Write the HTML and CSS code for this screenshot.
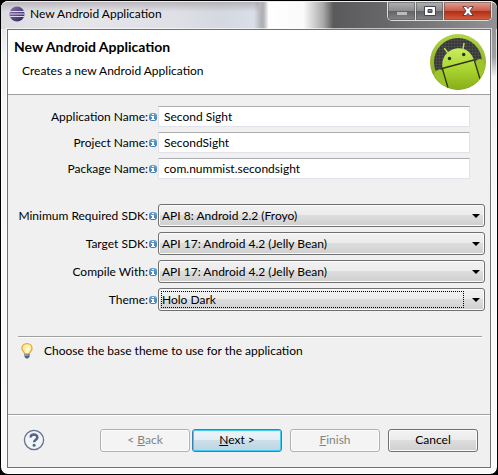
FILE: index.html
```html
<!DOCTYPE html>
<html lang="en">
<head>
<meta charset="utf-8">
<title>New Android Application</title>
<link rel="stylesheet" href="styles.css">
</head>
<body>
<svg width="0" height="0" class="defs" aria-hidden="true">
  <defs>
    <linearGradient id="blue" x1="0" y1="0" x2="0" y2="1"><stop offset="0" stop-color="#6aa5d0"/><stop offset="1" stop-color="#3c78ad"/></linearGradient>
    <symbol id="info" viewBox="0 0 8 8">
      <rect width="8" height="8" rx="3" fill="url(#blue)"/>
      <path d="M3 1h2v1H3zM3 3h2v3h1v1H2V6h1V4H2V3z" fill="#fff"/>
    </symbol>
  </defs>
</svg>
<main class="window">
  <header class="titlebar">
    <svg class="app-icon" viewBox="0 0 16 16" aria-hidden="true">
      <defs><linearGradient id="ecl" x1="0" y1="0" x2="1" y2="1"><stop offset="0" stop-color="#8a75ae"/><stop offset="1" stop-color="#302058"/></linearGradient></defs>
      <circle cx="8" cy="8" r="7.6" fill="url(#ecl)"/>
      <path d="M1 5.5h14M.5 8h15M1 10.5h14" stroke="#ded8ed" stroke-width="1.1"/>
    </svg>
    <h1 class="title">New Android Application</h1>
    <div class="window-controls">
      <button class="control" type="button" aria-label="Minimize" disabled><svg viewBox="0 0 12 12"><path d="M1 7h10v3H1z" fill="#bbb"/></svg></button>
      <button class="control" type="button" aria-label="Maximize"><svg viewBox="0 0 12 12"><path fill-rule="evenodd" d="M.5 1.500h11v9H.5zM4 4.500v3h4v-3z" fill="#fff" stroke="#434857"/></svg></button>
      <button class="control close" type="button" aria-label="Close"><svg viewBox="0 0 12 12"><path d="M.8 1.500h3.500L6 3.600l1.700-2.100h3.500L8 6l3.200 4.500H7.700L6 8.400l-1.700 2.100H.8L4 6z" fill="#fff" stroke="#4c3b45" stroke-width=".9"/></svg></button>
    </div>
  </header>
  <form class="dialog">
    <section class="banner">
      <div>
        <h2 class="heading">New Android Application</h2>
        <p class="subheading">Creates a new Android Application</p>
      </div>
      <svg class="logo" viewBox="0 0 56 56" aria-hidden="true">
        <defs>
          <linearGradient id="rim" x1="0" y1="0" x2="0" y2="1"><stop offset="0" stop-color="#b0d444"/><stop offset="1" stop-color="#779c16"/></linearGradient>
          <linearGradient id="droid" x1="0" y1="0" x2="0" y2="1"><stop offset="0" stop-color="#c9ed62"/><stop offset=".5" stop-color="#a9d430"/><stop offset="1" stop-color="#86ac18"/></linearGradient>
          <pattern id="mesh" width="3" height="3" patternUnits="userSpaceOnUse"><path d="M0 0h3v3H0z" fill="#383838"/><path d="M0 0h3M0 0v3" stroke="#555" stroke-width="1"/></pattern>
          <clipPath id="disc"><circle cx="28" cy="28" r="27.500"/></clipPath>
        </defs>
        <circle cx="28" cy="28" r="28" fill="url(#rim)"/>
        <circle cx="28" cy="28" r="24" fill="url(#mesh)"/>
        <g clip-path="url(#disc)">
          <path d="M5 38Q10 33 13 37L19 57H0zM45 28Q48 23 53 26L57 40 50 50z" fill="#9cc52b"/>
          <path d="M12.500 34C11 24 17 16 26 14.500C34 13 41 17 44 26L51 48Q39 58 28 56Q21 56 17 53z" fill="url(#droid)"/>
          <path d="M12 34.500L44 26M12.500 35L18 54M44.500 27L50 45" stroke="#30350e" stroke-width="1.300" fill="none"/>
          <path d="M18 19L14.500 14.500M33 15L34 9.500" stroke="#b9dd4b" stroke-width="1.500" stroke-linecap="round"/>
          <circle cx="19.500" cy="24.500" r="1.700" fill="#2b3010"/><circle cx="33.700" cy="20.500" r="1.700" fill="#2b3010"/>
        </g>
      </svg>
    </section>
    <section class="fields">
      <div class="row"><label for="app">Application Name:</label><svg class="info"><use href="#info"/></svg><input id="app" type="text" value="Second Sight"></div>
      <div class="row"><label for="project">Project Name:</label><svg class="info"><use href="#info"/></svg><input id="project" type="text" value="SecondSight"></div>
      <div class="row"><label for="package">Package Name:</label><svg class="info"><use href="#info"/></svg><input id="package" type="text" value="com.nummist.secondsight"></div>
    </section>
    <section class="fields choices">
      <div class="row"><label for="min">Minimum Required SDK:</label><svg class="info"><use href="#info"/></svg><div class="combo"><select id="min"><option>API 8: Android 2.2 (Froyo)</option></select></div></div>
      <div class="row"><label for="target">Target SDK:</label><svg class="info"><use href="#info"/></svg><div class="combo"><select id="target"><option>API 17: Android 4.2 (Jelly Bean)</option></select></div></div>
      <div class="row"><label for="compile">Compile With:</label><svg class="info"><use href="#info"/></svg><div class="combo"><select id="compile"><option>API 17: Android 4.2 (Jelly Bean)</option></select></div></div>
      <div class="row"><label for="theme">Theme:</label><svg class="info"><use href="#info"/></svg><div class="combo focused"><select id="theme"><option>Holo Dark</option></select></div></div>
    </section>
    <section class="hint">
      <svg class="bulb" viewBox="0 0 12 16" aria-hidden="true">
        <path d="M6 .7C3 .7 1 2.800 1 5.400C1 8 3.500 8.500 3.700 11h4.600C8.500 8.500 11 8 11 5.400C11 2.800 9 .7 6 .7z" fill="#fff0ad" stroke="#eca52c" stroke-width="1.300"/>
        <path d="M4 5l2 1.500L8 5M6 6.500V10" stroke="#fffbe8" stroke-width="1.200" fill="none"/>
        <path d="M3.500 11h5v3L7 15.500H5L3.500 14z" fill="#52647f"/><path d="M4 12h3.500" stroke="#b9cbe0"/>
      </svg>
      <p>Choose the base theme to use for the application</p>
    </section>
    <footer class="footer">
      <button class="help" type="button" aria-label="Help">
        <svg viewBox="0 0 22 22"><circle cx="11" cy="11" r="9.600" fill="#f3f4f7" stroke="#62728f" stroke-width="1.300"/><path d="M7.600 8.600C7.600 4.600 14.300 4.700 14.300 8.400C14.300 10.700 11.100 10.600 11.100 13.300" fill="none" stroke="#51658b" stroke-width="2.500"/><circle cx="11.100" cy="16.200" r="1.500" fill="#51658b"/></svg>
      </button>
      <div class="nav">
        <button class="btn" type="button" disabled>&lt; <u>B</u>ack</button>
        <button class="btn primary" type="button"><u>N</u>ext &gt;</button>
      </div>
      <button class="btn" type="button" disabled><u>F</u>inish</button>
      <button class="btn" type="button">Cancel</button>
    </footer>
  </form>
</main>
</body>
</html>
```
FILE: styles.css
```css
* { box-sizing: border-box; }

body {
  margin: 0;
  background: #000;
  color: #000;
  font: 12px/16px Lato, "Open Sans", sans-serif;
}

h1, h2, p { margin: 0; font-size: 12px; font-weight: 400; }
button, input, select { font: inherit; color: inherit; margin: 0; }
.defs { position: absolute; }

.window {
  display: flex;
  flex-direction: column;
  min-height: 100vh;
  padding: 0 6px 6px;
  border: 1px solid #000;
  border-radius: 8px;
  background:
    linear-gradient(#8c8c8e 0, #a0a0a2 56px, #e9edf300 76px) right / 7px 100% no-repeat,
    linear-gradient(#dcdde2 0, #f4f4f7 56px, #f8f8fa 50%, #fafafa);
  box-shadow: inset 0 0 0 1px #ffffffb0;
}

.titlebar {
  display: flex;
  align-items: flex-start;
  height: 28px;
  margin: 0 -6px;
  padding: 0 5px 0 8px;
  border-top: 1px solid #eee;
  border-radius: 7px 7px 0 0;
  background:
    linear-gradient(#9a94998c, #9a949900 10px) left / 52% 100% no-repeat,
    linear-gradient(90deg, #dcdde1, #e6e6ea 14%, #dfe0e6 35%, #d5d8e0 44%, #d9dee8 51%, #b0b1b6 52.5%, #b4b4b6 53%, #fff 54%, #fafafa 61%, #a8a8a8 65%, #5a5a5d 67%, #68686b 78%, #929294 100%);
}

.app-icon { width: 16px; height: 16px; margin-top: 4px; }
.title { flex: 1; margin: 4px 0 0 5px; }

.window-controls {
  display: flex;
  border: 1px solid #ddd;
  border-top: 0;
  border-radius: 0 0 5px 5px;
  overflow: hidden;
}

.control {
  display: flex;
  align-items: center;
  justify-content: center;
  width: 28px;
  height: 18px;
  padding: 0;
  border: 0;
  border-right: 1px solid #ddd;
  background: linear-gradient(#b1b1b3, #8c8c8f 48%, #626266 50%, #858589);
  box-shadow: inset 0 0 0 1px #5558;
}
.control svg { width: 12px; height: 12px; }
.close {
  width: 47px;
  border-right: 0;
  background: linear-gradient(#e3a292, #cb5c49 48%, #b02a14 50%, #d3603f);
}

.dialog {
  display: flex;
  flex: 1;
  flex-direction: column;
  border: 1px solid #707070;
  background: #f0f0f0;
  box-shadow: 0 0 0 1px #ffffffa0;
}

.banner {
  display: flex;
  justify-content: space-between;
  height: 65px;
  padding: 4px 4px 0 6px;
  border-bottom: 1px solid #a0a0a0;
  background: #fff;
}
.heading { margin-top: 5px; font-size: 14px; font-weight: 700; }
.subheading { margin: 8px 0 0 8px; }
.logo { width: 56px; height: 56px; }

.fields {
  display: flex;
  flex-direction: column;
  gap: 5px;
  padding: 11px 20px 0 8px;
}
.choices { padding: 25px 5px 0 8px; }

.row {
  display: grid;
  grid-template-columns: 132px 8px 1fr;
  align-items: center;
  column-gap: 1px;
}
.row label { text-align: right; white-space: nowrap; justify-self: end; }
.info { width: 8px; height: 8px; }

input {
  width: 100%;
  height: 21px;
  padding: 0 5px;
  border: 1px solid #e2e3ea;
  border-top-color: #abadb3;
  border-radius: 1px;
  background: #fff;
}

.combo { position: relative; }
.combo select {
  display: block;
  width: 100%;
  height: 23px;
  padding: 0 20px 0 3px;
  appearance: none;
  border: 1px solid #707070;
  border-radius: 3px;
  background: linear-gradient(#f2f2f2, #ebebeb 48%, #ddd 50%, #cfcfcf);
  box-shadow: inset 0 0 0 1px #fbfbfb;
}
.combo::after {
  content: "";
  position: absolute;
  top: 10px;
  right: 5px;
  border: 4px solid transparent;
  border-top-color: #000;
  border-bottom: 0;
}
.focused::before {
  content: "";
  position: absolute;
  inset: 3px 21px 3px 3px;
  border: 1px dotted #000;
  pointer-events: none;
}

.hint {
  display: flex;
  gap: 11px;
  flex: 1;
  margin: 25px 8px 0 10px;
  padding: 6px 0 0 3px;
  border-top: 1px solid #a0a0a0;
  box-shadow: inset 0 1px #fff;
}
.bulb { width: 12px; height: 16px; }

.footer {
  display: flex;
  align-items: center;
  gap: 8px;
  height: 53px;
  padding: 0 12px 2px 15px;
  border-top: 1px solid #a0a0a0;
  box-shadow: inset 0 1px #fff;
}
.help { width: 22px; height: 22px; margin-right: auto; padding: 0; border: 0; background: none; }
.help svg { display: block; }
.nav { display: flex; gap: 2px; }

.btn {
  width: 90px;
  height: 23px;
  padding: 0;
  border: 1px solid #707070;
  border-radius: 3px;
  background: linear-gradient(#f2f2f2, #ebebeb 48%, #ddd 50%, #cfcfcf);
  box-shadow: inset 0 0 0 1px #fbfbfb;
}
.btn:disabled { border-color: #adb2b5; background: #f4f4f4; color: #838383; }
.primary {
  border-color: #3c7fb1;
  background: linear-gradient(#edf4f8, #e2eef5 48%, #cbdfea 50%, #bcd5e2);
  box-shadow: inset 0 0 0 1px #3fcdf4;
}
```
